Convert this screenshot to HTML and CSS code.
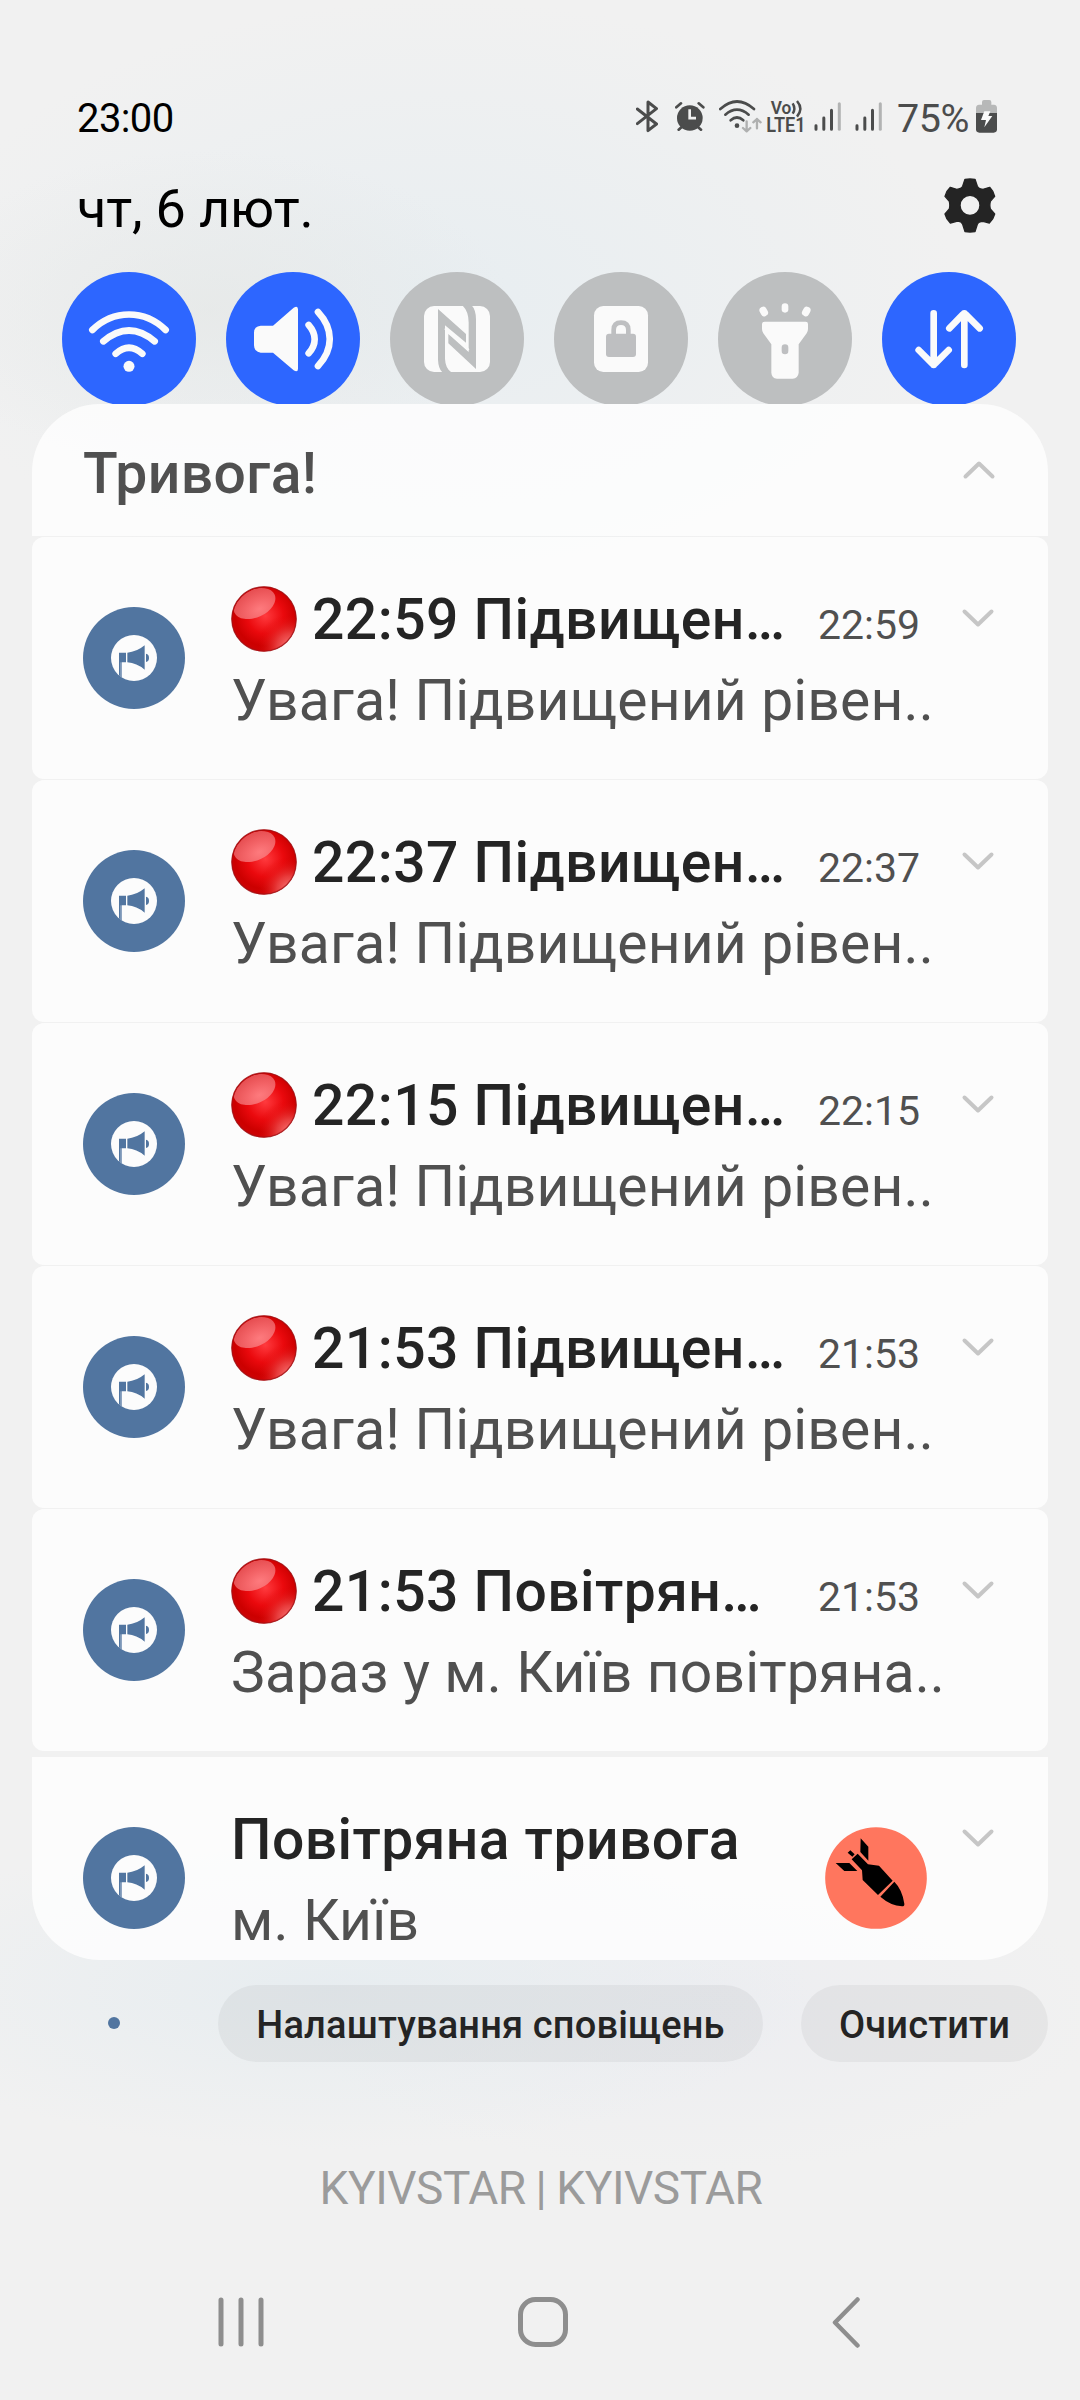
FILE: index.html
```html
<!DOCTYPE html>
<html lang="uk">
<head>
<meta charset="utf-8">
<title>Сповіщення</title>
<link rel="stylesheet" href="styles.css">
</head>
<body>
<svg class="defs" width="0" height="0">
  <defs>
    <radialGradient id="ballBase" cx="0.52" cy="0.45" r="0.62">
      <stop offset="0" stop-color="#ff3a3e"/><stop offset="0.45" stop-color="#ea090d"/><stop offset="0.75" stop-color="#cc0000"/><stop offset="1" stop-color="#cc0508"/>
    </radialGradient>
    <radialGradient id="ballGlow" cx="0.9" cy="0.92" r="0.5">
      <stop offset="0" stop-color="#ff8080"/><stop offset="0.4" stop-color="#f05050" stop-opacity="0.75"/><stop offset="1" stop-color="#e00000" stop-opacity="0"/>
    </radialGradient>
    <radialGradient id="ballShine" cx="0.55" cy="0.75" r="0.8">
      <stop offset="0" stop-color="#ff8a8d"/><stop offset="1" stop-color="#e8565a"/>
    </radialGradient>
    <clipPath id="ballClip"><circle cx="33" cy="33" r="31.500"/></clipPath>
    <clipPath id="discClip"><circle cx="162" cy="162" r="69"/></clipPath>
  </defs>
  <symbol id="ball" viewBox="0 0 66 66">
    <circle cx="33" cy="33" r="32.5" fill="url(#ballBase)"/>
    <circle cx="33" cy="33" r="32.5" fill="url(#ballGlow)"/>
    <g clip-path="url(#ballClip)"><ellipse cx="23.500" cy="17.500" rx="22" ry="14" transform="rotate(-24 23.500 17.500)" fill="url(#ballShine)" opacity="0.85"/></g>
    <circle cx="33" cy="33" r="32.2" fill="none" stroke="#9c1418" stroke-opacity="0.75" stroke-width="1.2"/>
  </symbol>
  <symbol id="megaphone" viewBox="9 9 306 306">
    <circle cx="162" cy="162" r="153" fill="#5175a0"/>
    <circle cx="162" cy="162" r="69" fill="#fcfcfc"/>
    <g fill="#5175a0" clip-path="url(#discClip)">
      <path d="M117 146H138V175H125V232H117Z"/>
      <path d="M142 146Q170 144 194 124V197Q170 177 142 175Z"/>
      <path d="M198 149Q207 151 207 161Q207 172 198 174Z"/>
    </g>
    <path d="M122 175V216" stroke="#b9c7d8" stroke-width="1.5"/>
  </symbol>
  <symbol id="down" viewBox="0 0 34 20"><path d="M3.5 3.5L17 16.5L30.5 3.5" fill="none" stroke="#c6c6c6" stroke-width="4" stroke-linecap="round" stroke-linejoin="round"/></symbol>
  <symbol id="signal" viewBox="641 60 82 99">
    <g stroke-width="9" stroke-linecap="round" stroke="#4b4c4c"><path d="M647 137V148M670.500 114V148M693.500 91V148"/><path d="M717 71V148" stroke="#b2b3b3"/></g>
  </symbol>
</svg>

<header class="status">
  <span class="clock">23:00</span>
  <div class="indicators">
    <svg class="bt" viewBox="108 60 66 99"><path d="M112 87L169.500 132L144 152V66L169.500 86L112 131" fill="none" stroke="#4b4c4c" stroke-width="9" stroke-linejoin="round" stroke-linecap="round"/></svg>
    <svg class="alarm" viewBox="224 60 90 99">
      <circle cx="268.500" cy="114" r="38.500" fill="#4b4c4c"/>
      <path d="M228 82L242 70M309 82L295 70M235 149L245 140M302 149L292 140" stroke="#4b4c4c" stroke-width="8" stroke-linecap="round"/>
      <path d="M268 88V114.500H287" fill="none" stroke="#f0f0f0" stroke-width="8"/>
    </svg>
    <svg class="wifi" viewBox="356 60 130 99">
      <g fill="none" stroke="#4b4c4c" stroke-width="8" stroke-linecap="round"><path d="M360 87Q410 42 461 87"/><path d="M375 104Q410 74 445 104"/><path d="M391 121Q410 104 429 121"/></g>
      <circle cx="410" cy="137" r="7" fill="#4b4c4c"/>
      <path d="M439 124V154M428 144L439 154L450 144M470 145V117M459 127L470 117L481 127" fill="none" stroke="#afb0b0" stroke-width="7" stroke-linecap="round" stroke-linejoin="round"/>
    </svg>
    <svg class="volte" viewBox="494 36 126 144">
      <g class="volte-text"><text x="511" y="102" font-size="55" textLength="62" lengthAdjust="spacingAndGlyphs">Vo</text><text x="498" y="157" font-size="58" textLength="118" lengthAdjust="spacingAndGlyphs">LTE1</text></g>
      <path d="M577 70Q587 86 577 101M590 63Q610 86 590 110" fill="none" stroke="#4b4c4c" stroke-width="7.500"/>
    </svg>
    <svg class="sig sig1"><use href="#signal"/></svg>
    <svg class="sig sig2"><use href="#signal"/></svg>
    <span class="percent">75%</span>
    <svg class="battery" viewBox="1128 60 63 99">
      <path d="M1146 66Q1146 60 1152 60H1168Q1174 60 1174 66V74H1182Q1191 75 1191 84V100H1128V84Q1128 75 1137 74H1146Z" fill="#b7b8b8"/>
      <path d="M1128 99H1191V148Q1191 158 1181 158H1138Q1128 158 1128 148Z" fill="#4b4c4c"/>
      <path d="M1153 94H1171L1165 108H1177L1153 142L1158 120H1143Z" fill="#fafafa"/>
    </svg>
  </div>
</header>

<div class="dateline">
  <span class="date">чт, 6 лют.</span>
  <svg class="gear" viewBox="1031 295 156 165">
    <path fill-rule="evenodd" fill="#242424" stroke="#242424" stroke-width="4" stroke-linejoin="round" d="M1094 299Q1109 297 1124 299L1131 320Q1134 327 1141 328L1148 329L1168 323Q1179 334 1183 350L1170 365Q1167 377 1170 388L1183 403Q1179 419 1167 430L1148 425Q1134 425 1131 434L1124 456Q1109 458 1094 456L1087 434Q1084 426 1076 425L1069 425L1050 430Q1038 419 1034 403L1047 388Q1050 377 1047 365L1034 350Q1038 334 1050 323L1069 329Q1084 328 1087 320ZM1109 347A30 30 0 1 0 1109 407A30 30 0 1 0 1109 347Z"/>
  </svg>
</div>

<nav class="toggles">
  <svg class="toggle on" viewBox="66 36 402 402">
    <g fill="none" stroke="#fafafa" stroke-width="20" stroke-linecap="round"><path d="M157 210C220 148 314 148 377 210"/><path d="M190 244Q267 179 344 244"/><path d="M227 281Q267 245 307 281"/></g><circle cx="267" cy="319" r="16.500" fill="#fafafa"/>
  </svg>
  <svg class="toggle on" viewBox="558 36 402 402">
    <path d="M662 197H699L761 143Q774 136 774 148V326Q774 338 761 331L699 278H662Q642 276 642 256V218Q642 199 662 197Z" fill="#fafafa"/>
    <path d="M806 195C830 222 830 254 806 280M834 156C881 206 881 268 834 318" fill="none" stroke="#fafafa" stroke-width="20" stroke-linecap="round"/>
  </svg>
  <svg class="toggle" viewBox="1050 36 402 402">
    <rect x="1152" y="138" width="198" height="198" rx="30" fill="#fafafa"/>
    <path d="M1194 147L1278 222V248L1215 196V296Q1216 324 1234 337H1207Q1195 325 1194 299Z" fill="#bdbfc0"/>
    <path d="M1308 327L1225 250V222L1286 276V188Q1286 154 1268 137H1296Q1308 150 1308 178Z" fill="#bdbfc0"/>
    <path d="M1215 205L1278 256M1225 214L1286 270" stroke="#fafafa" stroke-width="7"/>
  </svg>
  <svg class="toggle" viewBox="42 36 402 402">
    <rect x="162" y="138" width="162" height="198" rx="28" fill="#fafafa"/>
    <rect x="198" y="221" width="90" height="70" rx="9" fill="#bebfc1"/><path d="M221 226V210Q221 188 243 188Q265 188 265 210V226" fill="none" stroke="#bebfc1" stroke-width="14"/>
  </svg>
  <svg class="toggle" viewBox="534 36 402 402">
    <path d="M674 185H797Q804 185 804 192V207Q804 214 800 220L776 253V338Q774 355 758 356H711Q695 354 694 338V253L670 220Q666 214 666 207V192Q666 185 674 185Z" fill="#fafafa"/>
    <rect x="725" y="253" width="20" height="30" rx="10" fill="#bebfc1"/>
    <g fill="#fafafa"><rect x="725" y="130" width="20" height="28" rx="10"/><rect x="660" y="140" width="22" height="29" rx="10" transform="rotate(-28 671 154)"/><rect x="788" y="140" width="22" height="29" rx="10" transform="rotate(28 799 154)"/></g>
  </svg>
  <svg class="toggle on" viewBox="1026 36 402 402">
    <path d="M1181 160V315M1136 270L1176 310Q1181 316 1186 310L1226 270M1273 315V160M1228 205L1268 164Q1273 158 1278 164L1319 205" fill="none" stroke="#fafafa" stroke-width="20" stroke-linecap="round" stroke-linejoin="round"/>
  </svg>
</nav>

<main class="sheet">
  <section class="group-head"><h1>Тривога!</h1><svg class="chev up"><use href="#down"/></svg></section>
  <article class="card">
    <svg class="app"><use href="#megaphone"/></svg>
    <div class="text"><div class="line"><svg class="ball"><use href="#ball"/></svg><h2>22:59 Підвищен…</h2><time>22:59</time></div><p>Увага! Підвищений рівен..</p></div>
    <svg class="chev"><use href="#down"/></svg>
  </article>
  <article class="card">
    <svg class="app"><use href="#megaphone"/></svg>
    <div class="text"><div class="line"><svg class="ball"><use href="#ball"/></svg><h2>22:37 Підвищен…</h2><time>22:37</time></div><p>Увага! Підвищений рівен..</p></div>
    <svg class="chev"><use href="#down"/></svg>
  </article>
  <article class="card">
    <svg class="app"><use href="#megaphone"/></svg>
    <div class="text"><div class="line"><svg class="ball"><use href="#ball"/></svg><h2>22:15 Підвищен…</h2><time>22:15</time></div><p>Увага! Підвищений рівен..</p></div>
    <svg class="chev"><use href="#down"/></svg>
  </article>
  <article class="card">
    <svg class="app"><use href="#megaphone"/></svg>
    <div class="text"><div class="line"><svg class="ball"><use href="#ball"/></svg><h2>21:53 Підвищен…</h2><time>21:53</time></div><p>Увага! Підвищений рівен..</p></div>
    <svg class="chev"><use href="#down"/></svg>
  </article>
  <article class="card">
    <svg class="app"><use href="#megaphone"/></svg>
    <div class="text"><div class="line"><svg class="ball"><use href="#ball"/></svg><h2>21:53 Повітрян…</h2><time>21:53</time></div><p>Зараз у м. Київ повітряна..</p></div>
    <svg class="chev"><use href="#down"/></svg>
  </article>
  <article class="card last">
    <svg class="app"><use href="#megaphone"/></svg>
    <div class="text"><div class="line"><h2>Повітряна тривога</h2></div><p>м. Київ</p></div>
    <svg class="bomb" viewBox="9 9 306 306">
      <circle cx="162" cy="162" r="152.500" fill="#ff765e"/>
      <path d="M116 43L139 68V110L115 84ZM41 117H82L106 141H67ZM77 86L85 79L98 91L91 98ZM89 106L107 89L138 121L171 125L212 170L168 213L122 168L120 139ZM217 173Q241 197 247 239Q248 247 240 247Q206 245 175 218Z"/>
    </svg>
    <svg class="chev"><use href="#down"/></svg>
  </article>
</main>

<div class="actions">
  <i class="dot"></i>
  <button class="pill settings"><span>Налаштування сповіщень</span></button>
  <button class="pill clear"><span>Очистити</span></button>
</div>

<div class="carrier"><span>KYIVSTAR | KYIVSTAR</span></div>

<footer class="navbar">
  <svg class="recents" viewBox="0 0 46 50"><path d="M3 3V47M23 3V47M43 3V47" stroke="#8e8e8e" stroke-width="5" stroke-linecap="round"/></svg>
  <svg class="home" viewBox="0 0 50 50"><rect x="2.500" y="2.500" width="45" height="45" rx="15" fill="none" stroke="#8e8e8e" stroke-width="5"/></svg>
  <svg class="back" viewBox="0 0 28 51"><path d="M25.500 2.500L3 25.500L25.500 48.500" fill="none" stroke="#8e8e8e" stroke-width="4.500" stroke-linecap="round" stroke-linejoin="round"/></svg>
</footer>
</body>
</html>
```
FILE: styles.css
```css
* { box-sizing: border-box; }
body {
  margin: 0;
  width: 1080px;
  height: 2400px;
  overflow: hidden;
  display: flex;
  flex-direction: column;
  font-family: Roboto, "Noto Sans", sans-serif;
  color: #242424;
  background:
    radial-gradient(ellipse 300px 160px at 210px 310px, rgba(228, 230, 228, 0.6), transparent),
    radial-gradient(ellipse 520px 300px at 440px 300px, rgba(230, 237, 241, 0.85), transparent),
    radial-gradient(ellipse 480px 160px at 330px 1990px, rgba(229, 236, 240, 0.85), transparent),
    radial-gradient(ellipse 400px 160px at 700px 2010px, rgba(236, 237, 241, 0.9), transparent),
    #f1f1f1;
}
h1, h2, p { margin: 0; white-space: nowrap; }
svg { flex: none; display: block; }
.defs { position: absolute; }

.status {
  height: 138px;
  padding: 98px 83px 0 77px;
  display: flex;
  justify-content: space-between;
}
.clock { font-size: 40px; line-height: 42px; letter-spacing: -0.6px; color: #000; }
.indicators { display: flex; padding-top: 2px; height: 35px; }
.bt { width: 22px; height: 33px; }
.alarm { width: 30px; height: 33px; margin-left: 16.700px; }
.wifi { width: 43.300px; height: 33px; margin-left: 14px; }
.volte { width: 42px; height: 48px; margin: -8px -2px 0 2.700px; }
.volte-text { font-weight: 600; fill: #4b4c4c; }
.sig { width: 27.300px; height: 33px; }
.sig1 { margin-left: 9px; }
.sig2 { margin-left: 13.700px; }
.percent { width: 79px; margin-left: 15px; font-size: 39.500px; line-height: 37px; color: #4b4c4c; letter-spacing: -0.5px; white-space: nowrap; }
.battery { width: 21px; height: 33px; }

.dateline {
  height: 134px;
  padding: 38px 84px 0 77px;
  display: flex;
  justify-content: space-between;
}
.date { font-size: 54px; line-height: 66px; letter-spacing: -0.2px; color: #000; }
.gear { width: 52px; height: 55px; margin-top: 2px; }

.toggles {
  height: 132px;
  padding: 0 62px;
  display: flex;
  gap: 30px;
  overflow: hidden;
}
.toggle { width: 134px; height: 134px; border-radius: 50%; background: #bdbfc0; }
.toggle.on { background: #2d66ff; }

.sheet {
  width: 1016px;
  height: 1556px;
  margin-left: 32px;
  border-radius: 68px;
  overflow: hidden;
  display: flex;
  flex-direction: column;
  gap: 1px;
  flex: none;
}
.group-head {
  height: 132px;
  flex: none;
  padding: 6px 52px 0 51px;
  display: flex;
  align-items: center;
  justify-content: space-between;
  background: rgba(253, 253, 253, 0.88);
}
h1 { font-size: 57px; font-weight: 500; letter-spacing: 0.42px; color: #505050; }
.chev { width: 34px; height: 20px; margin-left: 31px; margin-top: 29px; }
.chev.up { transform: scaleY(-1); margin-top: -6px; }
.card {
  height: 242px;
  flex: none;
  border-radius: 12px;
  padding: 42px 52px 0 51px;
  display: flex;
  background: rgba(253, 253, 253, 0.88);
}
.card.last { margin-top: 5px; border-radius: 0; }
.app { width: 102px; height: 102px; margin-top: 28px; }
.text { width: 699px; margin-left: 46px; flex: none; }
.line { height: 81px; display: flex; align-items: baseline; }
.ball { width: 66px; height: 66px; margin-right: 15px; align-self: flex-start; margin-top: 7px; }
h2 { font-size: 57px; line-height: 81px; font-weight: 500; letter-spacing: 0.45px; }
time { margin-left: auto; width: 112px; font-size: 41px; color: #505050; }
p { font-size: 57px; line-height: 81px; letter-spacing: 0.16px; color: #505050; }
.card.last .text { width: 563px; }
.bomb { width: 102px; height: 102px; margin: 28px 0 0 31px; }
.card.last .chev { margin-left: 34px; }

.actions {
  height: 102px;
  padding: 25px 32px 0 108px;
  display: flex;
  align-items: center;
}
.dot { width: 12px; height: 12px; border-radius: 50%; background: #5175a0; margin-top: -1px; }
.pill {
  height: 77px;
  border: 0;
  border-radius: 39px;
  background: rgba(0, 0, 0, 0.045);
  font: 500 38px/74px Roboto, "Noto Sans", sans-serif;
  letter-spacing: 0.16px;
  color: #242424;
  padding: 3px 0 0;
  white-space: nowrap;
}
.settings { width: 545px; margin-left: 98px; }
.clear { width: 247px; margin-left: 38px; }

.carrier { height: 148px; padding: 87px 0 0 2px; text-align: center; font-size: 46px; line-height: 78px; letter-spacing: -0.45px; word-spacing: -1px; color: #9b9b9b; white-space: nowrap; }

.navbar { height: 190px; padding: 87px 220px 0 218px; display: flex; justify-content: space-between; }
.recents { width: 46px; height: 50px; }
.home { width: 50px; height: 50px; margin-right: 10px; }
.back { width: 28px; height: 51px; }
```
